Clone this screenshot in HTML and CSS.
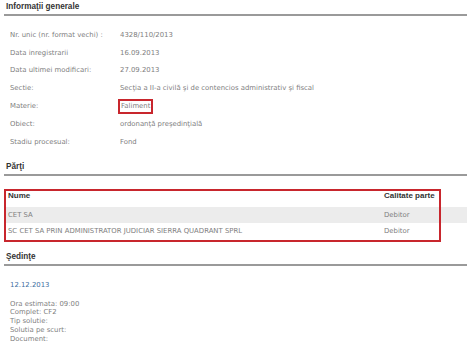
FILE: index.html
```html
<!DOCTYPE html>
<html lang="ro">
<head>
  <meta charset="UTF-8" />
  <title>Dosar 4328/110/2013</title>
  <link rel="stylesheet" href="styles.css">
</head>
<body>

  <div class="page">
    <h2 class="section-title">Informaţii generale</h2>

    <div class="info">
      <span class="label">Nr. unic (nr. format vechi) :</span>
      <span class="value">4328/110/2013</span>

      <span class="label">Data inregistrarii</span>
      <span class="value">16.09.2013</span>

      <span class="label">Data ultimei modificari:</span>
      <span class="value">27.09.2013</span>

      <span class="label">Sectie:</span>
      <span class="value">Secţia a II-a civilă şi de contencios administrativ şi fiscal</span>

      <span class="label">Materie:</span>
      <span class="value"><span class="mark">Faliment</span></span>

      <span class="label">Obiect:</span>
      <span class="value">ordonanţă preşedinţială</span>

      <span class="label">Stadiu procesual:</span>
      <span class="value">Fond</span>
    </div>

    <h2 class="section-title section-gap">Părţi</h2>

    <div class="parties">
      <table class="parties-table">
        <thead>
          <tr>
            <th class="col-name">Nume</th>
            <th>Calitate parte</th>
          </tr>
        </thead>
        <tbody>
          <tr class="odd">
            <td>CET SA</td>
            <td>Debitor</td>
          </tr>
          <tr>
            <td>SC CET SA PRIN ADMINISTRATOR JUDICIAR SIERRA QUADRANT SPRL</td>
            <td>Debitor</td>
          </tr>
        </tbody>
      </table>
      <div class="highlight"></div>
    </div>

    <h2 class="section-title hearings-gap">Şedinţe</h2>

    <div class="hearing">
      <div class="hearing-date">12.12.2013</div>
      <div class="hearing-details">
        Ora estimata: 09:00<br>
        Complet: CF2<br>
        Tip solutie:<br>
        Solutia pe scurt:<br>
        Document:
      </div>
    </div>
  </div>

</body>
</html>
```

FILE: styles.css
```css
body {
  margin: 0;
  background: #ffffff;
  font-family: 'DejaVu Sans', Verdana, sans-serif;
  font-size: 6.9px;
  color: #808080;
}

.page {
  padding: 0 3px 0 4px;
}

.section-title {
  margin: 0;
  padding: 2px 0 2px 2px;
  line-height: 10px;
  font-family: 'Liberation Sans', Arial, sans-serif;
  font-size: 8.2px;
  font-weight: bold;
  color: #333333;
  border-bottom: 2px solid #9a9a9a;
}

.section-gap { margin-top: 9px; }
.hearings-gap { margin-top: 11px; }

.info {
  display: grid;
  grid-template-columns: 110px 1fr;
  grid-auto-rows: 17.8px;
  align-items: center;
  margin-top: 10px;
  padding-left: 6px;
}

.mark {
  display: inline-block;
  border: 2px solid #c8262d;
  padding: 1px 1px;
  margin-left: -2px;
  line-height: 9px;
}

/* parties table */
.parties {
  position: relative;
  margin-top: 13px;
}

.parties-table {
  width: 100%;
  border-collapse: collapse;
}

.parties-table th,
.parties-table td {
  text-align: left;
  line-height: 10px;
  padding: 3px 4px;
}

.parties-table th {
  padding: 2px 4px 6px;
  font-family: 'Liberation Sans', Arial, sans-serif;
  font-size: 8px;
  font-weight: bold;
  color: #333333;
}

.parties-table .col-name { width: 368px; }

.parties-table .odd td { background: #ececec; }

.highlight {
  position: absolute;
  top: 0;
  left: 0;
  right: 26px;
  bottom: -3px;
  border: 2px solid #c8262d;
  pointer-events: none;
}

/* hearings */
.hearing {
  padding-left: 6px;
}

.hearing-date {
  margin-top: 14px;
  line-height: 10px;
  color: #3f6f9f;
}

.hearing-details {
  margin-top: 10px;
  line-height: 8.8px;
}
```
